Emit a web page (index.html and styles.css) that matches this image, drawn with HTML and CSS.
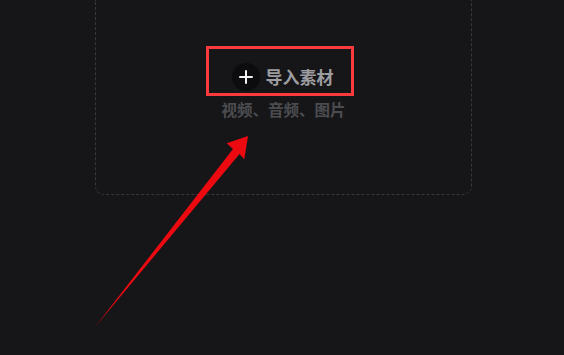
FILE: index.html
```html
<!DOCTYPE html>
<html lang="zh-CN">
<head>
<meta charset="utf-8">
<title>导入素材</title>
<link rel="stylesheet" href="styles.css">
</head>
<body>
<div class="stage">
  <div class="dropzone">
    <div class="import-row">
      <span class="plus-circle">
        <svg width="14" height="14" viewBox="0 0 14 14"><path d="M7 1v12M1 7h12" stroke="#f2f2f2" stroke-width="2" stroke-linecap="round" fill="none"/></svg>
      </span>
      <span class="import-label">导入素材</span>
    </div>
    <div class="import-hint">视频、音频、图片</div>
  </div>
  <div class="highlight"></div>
  <svg class="arrow" width="564" height="355" viewBox="0 0 564 355">
    <polygon points="95,327 233,149 226.7,143.3 248,136 244.3,159.3 239.5,154" fill="#ec0a10"/>
  </svg>
</div>
</body>
</html>
```
FILE: styles.css
```css
html, body {
  margin: 0;
  padding: 0;
  background: #161618;
}
body {
  width: 564px;
  height: 355px;
  overflow: hidden;
  font-family: "Noto Sans CJK SC", "Noto Sans", sans-serif;
}
.stage {
  position: relative;
  width: 564px;
  height: 355px;
  padding-left: 95px;
  box-sizing: border-box;
}
.dropzone {
  width: 377px;
  height: 195px;
  box-sizing: border-box;
  border: 1px dashed #38383b;
  border-top: none;
  border-radius: 0 0 9px 9px;
  display: flex;
  flex-direction: column;
  align-items: center;
  padding-top: 63px;
}
.import-row {
  display: flex;
  align-items: center;
  gap: 6px;
  height: 28px;
  margin-left: -2px;
}
.plus-circle {
  width: 28px;
  height: 28px;
  border-radius: 50%;
  background: #0c0c0e;
  display: flex;
  align-items: center;
  justify-content: center;
}
.plus-circle svg {
  display: block;
}
.import-label {
  font-size: 17px;
  font-weight: 700;
  color: #9d9da1;
  line-height: 28px;
}
.import-hint {
  margin-top: 8px;
  font-size: 15.5px;
  font-weight: 700;
  color: #4c4c50;
  line-height: 20px;
}
.highlight {
  position: absolute;
  left: 206px;
  top: 46px;
  width: 148px;
  height: 50px;
  box-sizing: border-box;
  border: 3px solid #fb3a3e;
}
.arrow {
  position: absolute;
  left: 0;
  top: 0;
}
```
